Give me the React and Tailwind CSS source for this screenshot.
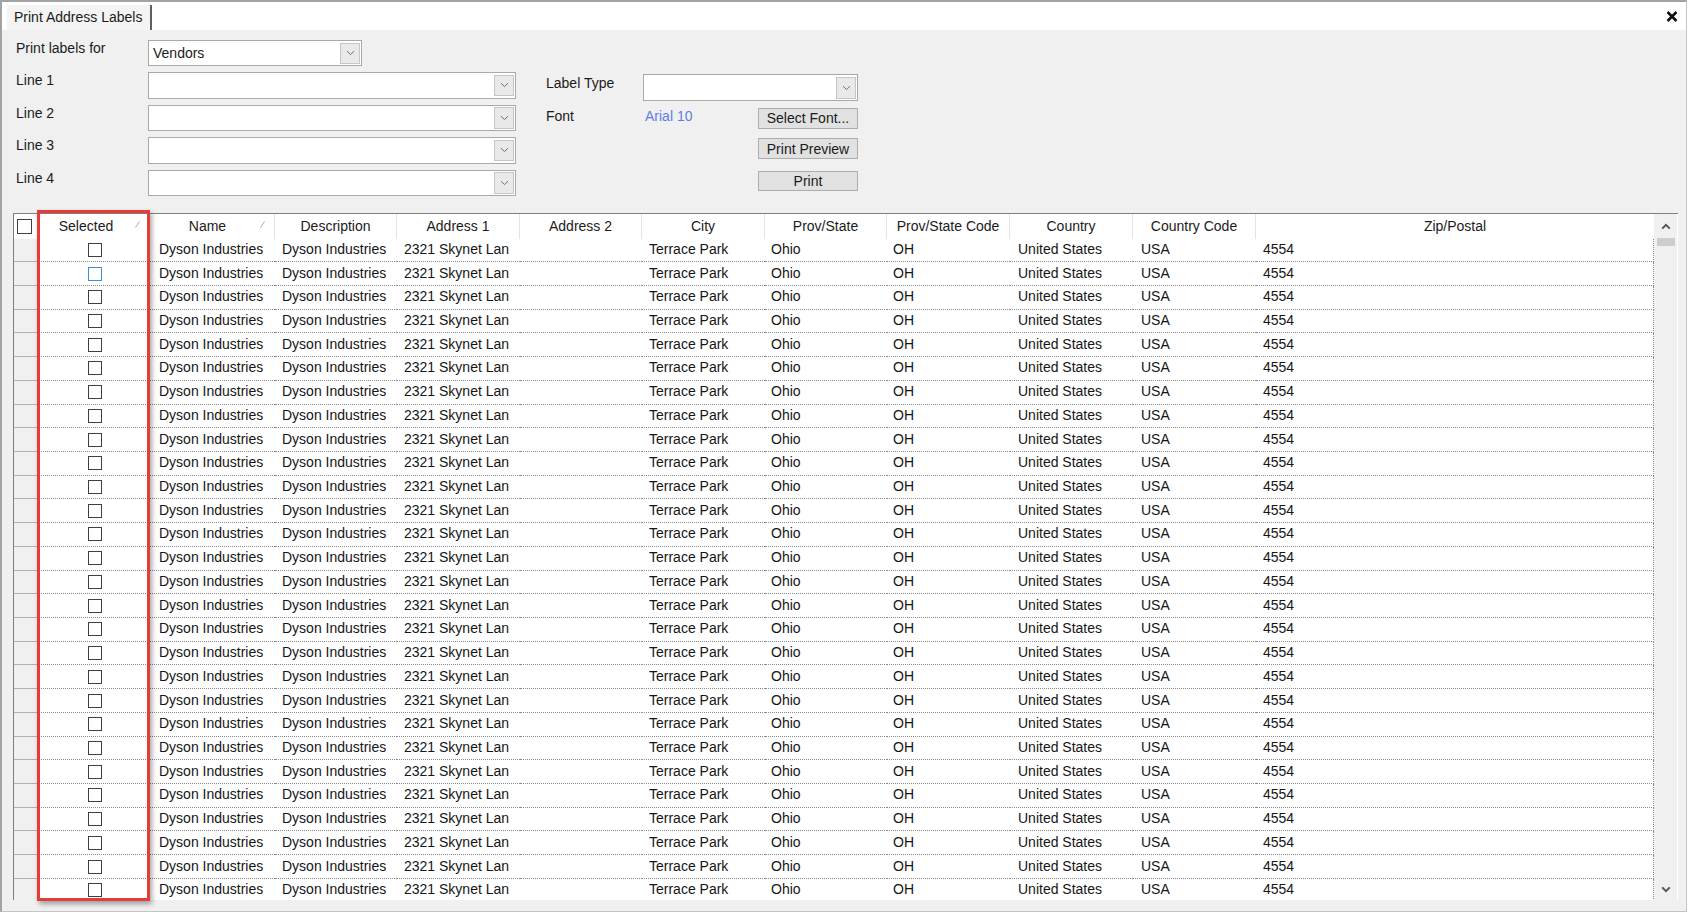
import React from 'react'

const cols = [
  { label: 'Name', w: 'w-[125px]', pad: 'pl-[9px]', value: 'Dyson Industries', sort: true },
  { label: 'Description', w: 'w-[122px]', pad: 'pl-[7px]', value: 'Dyson Industries' },
  { label: 'Address 1', w: 'w-[123px]', pad: 'pl-[7px]', value: '2321 Skynet Lan' },
  { label: 'Address 2', w: 'w-[122px]', pad: 'pl-[7px]', value: '' },
  { label: 'City', w: 'w-[123px]', pad: 'pl-[7px]', value: 'Terrace Park' },
  { label: 'Prov/State', w: 'w-[122px]', pad: 'pl-[6px]', value: 'Ohio' },
  { label: 'Prov/State Code', w: 'w-[123px]', pad: 'pl-[6px]', value: 'OH' },
  { label: 'Country', w: 'w-[123px]', pad: 'pl-[8px]', value: 'United States' },
  { label: 'Country Code', w: 'w-[123px]', pad: 'pl-[8px]', value: 'USA' },
  { label: 'Zip/Postal', w: 'w-[398px]', pad: 'pl-[7px]', value: '4554', last: true },
]

function Chevron() {
  return (
    <svg width="9" height="6" viewBox="0 0 9 6" fill="none">
      <path d="M1 1.2 L4.5 4.6 L8 1.2" stroke="#6e6e6e" strokeWidth="1" />
    </svg>
  )
}

function Combo({ className, text }) {
  return (
    <div className={`${className} bg-white border border-[#a9a9a9] flex items-center justify-between pl-[4px] pr-[1px]`}>
      <span className="leading-[16px]">{text}</span>
      <div className="w-[20px] h-[calc(100%-3px)] bg-[#e9e9e9] border border-[#c6c6c6] flex items-center justify-center">
        <Chevron />
      </div>
    </div>
  )
}

function Button({ className, children }) {
  return (
    <div className={`${className} w-[100px] bg-[#e1e1e1] border border-[#adadad] flex items-center justify-center leading-[16px]`}>
      {children}
    </div>
  )
}

function Box({ blue }) {
  return <div className={`w-[14px] h-[14px] bg-white border ${blue ? 'border-[#3d8ee0]' : 'border-[#3f3f3f]'}`} />
}

function SortMark() {
  return (
    <svg className="absolute right-[9px] top-[7px]" width="5" height="7" viewBox="0 0 5 7">
      <path d="M0.5 6.5 L4.5 0.5" stroke="#a8a8a8" strokeWidth="1" />
    </svg>
  )
}

function ScrollArrow({ up }) {
  return (
    <svg width="10" height="7" viewBox="0 0 10 7" fill="none">
      <path d={up ? 'M1.2 5.6 L5 1.8 L8.8 5.6' : 'M1.2 1.4 L5 5.2 L8.8 1.4'} stroke="#555" strokeWidth="2" />
    </svg>
  )
}

export default function App() {
  const rows = Array.from({ length: 28 }, (_, i) => i)

  return (
    <div className="relative w-[1689px] h-[914px] bg-white overflow-hidden font-['Liberation_Sans',Arial,sans-serif] text-[14px] text-[#1b1b1b]">
      <div className="w-[1687px] h-[912px] border-t-2 border-l-2 border-r border-b border-t-[#a3a3a3] border-l-[#a3a3a3] border-r-[#c4c4c4] border-b-[#c4c4c4] flex flex-col">
        {/* tab strip */}
        <div className="h-[28px] shrink-0 bg-white flex items-end justify-between">
          <div className="ml-[5px] h-[25px] pl-[7px] pr-[8px] pb-[1px] bg-[#f4f4f4] border-r-2 border-[#5f5f5f] flex items-center leading-[16px]">
            Print Address Labels
          </div>
          <svg className="mb-[8px] mr-[8px]" width="12" height="11" viewBox="0 0 12 11">
            <path d="M1.5 1 L10.5 10 M10.5 1 L1.5 10" stroke="#111" strokeWidth="2.6" />
          </svg>
        </div>

        {/* panel */}
        <div className="flex-1 bg-[#f0f0f0] flex flex-col">
          {/* controls */}
          <div className="h-[183px] shrink-0 pl-[14px] pt-[10px] flex">
            <div className="w-[502px] flex flex-col">
              <div className="flex items-start">
                <div className="w-[132px] leading-[16px]">Print labels for</div>
                <Combo className="w-[214px] h-[26px]" text="Vendors" />
              </div>
              {['Line 1', 'Line 2', 'Line 3', 'Line 4'].map(l => (
                <div key={l} className="flex items-start mt-[6px]">
                  <div className="w-[132px] leading-[16px]">{l}</div>
                  <Combo className="w-[368px] h-[26.5px]" text="" />
                </div>
              ))}
            </div>

            <div className="ml-[28px] pt-[34px] flex flex-col">
              <div className="flex items-start">
                <div className="w-[97px] leading-[16px] pt-[1px]">Label Type</div>
                <Combo className="w-[215px] h-[27px]" text="" />
              </div>
              <div className="flex items-start mt-[7px]">
                <div className="w-[97px] leading-[16px]">Font</div>
                <div className="w-[115px] leading-[16px] pl-[2px] text-[#5d7de2]">Arial 10</div>
                <Button className="h-[20.5px]">Select Font...</Button>
              </div>
              <Button className="h-[21px] mt-[9.5px] ml-[212px]">Print Preview</Button>
              <Button className="h-[20px] mt-[12px] ml-[212px]">Print</Button>
            </div>
          </div>

          {/* grid */}
          <div className="ml-[11px] w-[1665px] h-[687px] shrink-0 border-t border-l border-[#7f7f7f] bg-white flex">
            <div className="w-[1640px] flex flex-col overflow-hidden">
              {/* header */}
              <div className="h-[24.5px] shrink-0 flex">
                <div className="w-[23px] flex items-center pl-[3px]">
                  <div className="w-[15px] h-[15px] border border-[#3f3f3f] bg-white" />
                </div>
                <div className="relative w-[113px] pr-[14px] border-r border-[#e4e4e4] flex items-center justify-center leading-[16px]">
                  Selected
                  <SortMark />
                </div>
                {cols.map(c => (
                  <div key={c.label} className={`relative ${c.w} ${c.sort ? 'pr-[9px]' : ''} ${c.last ? '' : 'border-r border-[#e4e4e4]'} flex items-center justify-center leading-[16px] whitespace-nowrap`}>
                    {c.label}
                    {c.sort && <SortMark />}
                  </div>
                ))}
              </div>

              {/* rows */}
              {rows.map(r => (
                <div key={r} className="h-[23.73px] shrink-0 flex">
                  <div className="w-[23px] bg-[#f0f0f0] border-b border-[#b0b0b0]" />
                  <div className="w-[113px] border-b border-dotted border-[#8a8a8a] flex items-center justify-center pl-[2px]">
                    <Box blue={r === 1} />
                  </div>
                  {cols.map(c => (
                    <div
                      key={c.label}
                      className={`${c.w} ${c.pad} border-b border-dotted border-[#8a8a8a] ${c.last ? 'border-r' : ''} flex items-center pb-[2px] leading-[16px] whitespace-nowrap overflow-hidden text-[#151515]`}
                    >
                      {c.value}
                    </div>
                  ))}
                </div>
              ))}
            </div>

            {/* scrollbar */}
            <div className="w-[23px] bg-[#f0f0f0] flex flex-col">
              <div className="h-[24px] flex items-center justify-center">
                <ScrollArrow up />
              </div>
              <div className="ml-[3px] w-[18px] h-[8px] bg-[#cdcdcd]" />
              <div className="flex-1" />
              <div className="h-[22px] flex items-center justify-center">
                <ScrollArrow />
              </div>
            </div>
          </div>
        </div>
      </div>

      {/* highlight */}
      <div className="absolute left-[37px] top-[210px] w-[113px] h-[691px] border-[3px] border-[#e63c36] shadow-[2px_3px_5px_rgba(0,0,0,0.35)] pointer-events-none" />
    </div>
  )
}
